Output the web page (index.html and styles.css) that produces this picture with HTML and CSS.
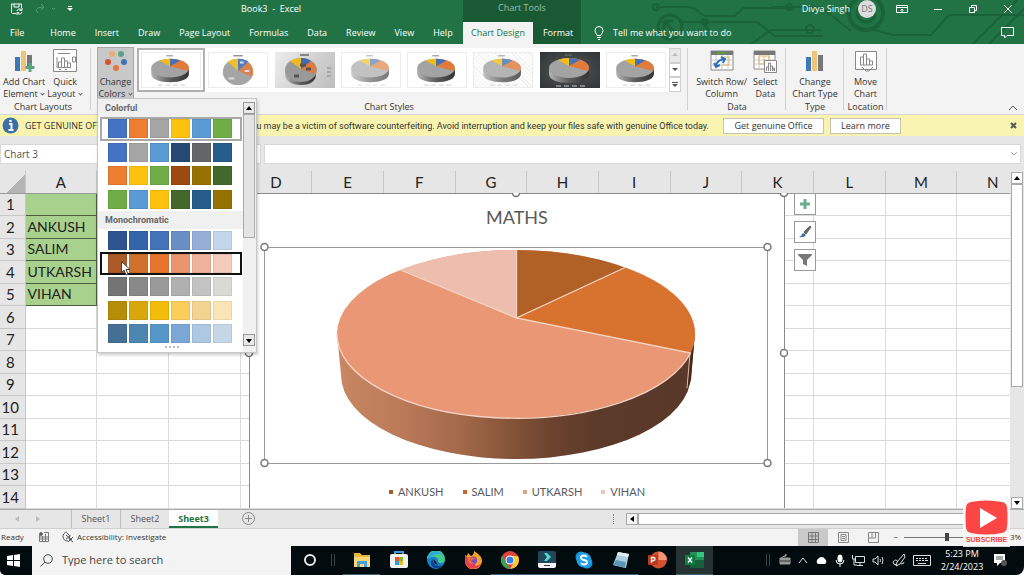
FILE: index.html
```html
<!DOCTYPE html>
<html lang="en">
<head>
<meta charset="utf-8">
<title>Book3 - Excel</title>
<link rel="stylesheet" href="styles.css">
</head>
<body>
<svg class="defs" aria-hidden="true">
  <defs>
    <linearGradient id="rim" x1="0" x2="1" y1="0" y2="0">
      <stop offset="0" stop-color="#b5b5b5"/><stop offset=".5" stop-color="#5c5c5c"/><stop offset="1" stop-color="#333"/>
    </linearGradient>
    <symbol id="pie" viewBox="0 0 60 36">
      <path d="M9 17v5c0 6 9 9 20 9s20-3 20-9v-5z" fill="url(#rim)"/>
      <ellipse cx="29" cy="16" rx="20" ry="10" fill="#a3a3a3"/>
      <path d="M29 14V6c10 0 20 4 20 10l-1 3z" fill="#e07b39"/>
      <path d="M29 14V6q6 0 11 2z" fill="#4472b8"/>
      <path d="M29 14L18 8q5-2 11-2z" fill="#f5bd14"/>
      <path d="M25 3h7" stroke="#777"/>
      <path d="M16 34h5m3 0h5m3 0h5m3 0h5" stroke="#ccc"/>
    </symbol>
  </defs>
</svg>

<header class="titlebar">
  <div class="title-main">
    <div class="title-row">
      <button class="ico" aria-label="Save"><svg width="12" height="12" viewBox="0 0 12 12" fill="none" stroke="#fff"><path d="M5 10.500H1.500l-1-1V1h10v4M3 1v3h5V1M6 8a2.500 2.500 0 0 1 4.500-1M11 5v2.500H8.500M11 9a2.500 2.500 0 0 1-4.500 1M6 12V9.500h2"/></svg></button>
      <button class="ico redo" aria-label="Redo"><svg width="20" height="12" viewBox="0 0 20 12" fill="none" stroke="#5c9b78"><path d="M3 10C-1 6 3 4 9 4M6 1l3 3-3 3M17 5l1.500 1.500L20 5"/></svg></button>
      <button class="ico more" aria-label="Customize Quick Access Toolbar"><svg width="6" height="6" viewBox="0 0 6 6" fill="#fff"><path d="M1 0h4v1H1zM0 2h6L3 5z"/></svg></button>
      <span class="doc">Book3&nbsp; -&nbsp; Excel</span>
    </div>
    <nav class="tabs">
      <a href="#" class="file">File</a><a href="#">Home</a><a href="#">Insert</a><a href="#">Draw</a><a href="#">Page Layout</a><a href="#">Formulas</a><a href="#">Data</a><a href="#">Review</a><a href="#">View</a><a href="#">Help</a>
    </nav>
  </div>
  <div class="title-tools">
    <div class="tools-name">Chart Tools</div>
    <nav class="tabs"><a href="#" class="on" aria-current="page">Chart Design</a><a href="#">Format</a></nav>
  </div>
  <div class="title-end">
    <svg class="circuit" width="443" height="44" viewBox="0 0 443 44" fill="none" stroke="#1a6239" stroke-width="2" aria-hidden="true">
      <path d="M75 7h30q8 0 13 5l6 4h30l8-8h48M98 22h22l16 16M170 44l20-14h50M124 22h52l18 14h48M290 29l22 6h38l18-20h75M190 7h50l30 24M392 44l44-44M408 44l36-36"/>
      <circle cx="75" cy="7" r="3"/><circle cx="124" cy="22" r="3" fill="#1a6239"/><circle cx="208" cy="7" r="3"/><circle cx="229" cy="29" r="4"/>
      <circle cx="89" cy="27" r="12" stroke-width="3"/><path d="M83 21v12M83 21h9M84 22l11 11" stroke-width="3"/>
      <circle cx="285" cy="13" r="17" stroke-width="4"/><circle cx="285" cy="13" r="9" stroke-width="3"/>
    </svg>
    <div class="title-row end">
      <span class="user">Divya Singh</span><span class="avatar">DS</span>
      <button class="ico" aria-label="Ribbon display options"><svg width="12" height="10" viewBox="0 0 12 10" fill="none" stroke="#fff"><path d="M.5 1.500h11v7H.5zM.5 3.500h11M6 8V5M4.500 6.500L6 5l1.500 1.500"/></svg></button>
      <button class="ico" aria-label="Minimize"><svg width="10" height="10" stroke="#fff"><path d="M1 5.500h8"/></svg></button>
      <button class="ico" aria-label="Restore"><svg width="10" height="10" fill="none" stroke="#fff"><path d="M1.500 3.500h5v5h-5zM3.500 3V1.500h5v5H7"/></svg></button>
      <button class="ico" aria-label="Close"><svg width="10" height="10" stroke="#fff"><path d="M1 1l8 8M9 1L1 9"/></svg></button>
    </div>
    <div class="tell-row">
      <svg width="10" height="14" viewBox="0 0 10 14" fill="none" stroke="#fff"><path d="M3 9.500C3 7.500 1 7 1 4.500a4 4 0 0 1 8 0C9 7 7 7.500 7 9.500zM3 11.500h4M4 13.500h2"/></svg>
      <button class="tell">Tell me what you want to do</button>
      <button class="ico comment" aria-label="Comments"><svg width="13" height="12" viewBox="0 0 13 12" fill="none" stroke="#fff"><path d="M.5.500h12v8H6L3.500 11V8.500h-3z"/></svg></button>
    </div>
  </div>
</header>

<section class="ribbon" aria-label="Chart Design">
  <div class="group layouts">
    <div class="group-body">
      <button class="big"><svg width="24" height="24" viewBox="0 0 24 24"><path d="M3 8h5v14H3z" fill="#3d7ab5"/><path d="M9 2h5v20H9z" fill="#efc57d"/><path d="M15 6h5v13h-5z" fill="#777"/><path d="M18 14v9M13.500 18.500h9" stroke="#5aa583" stroke-width="3"/></svg><span>Add Chart<br>Element <i></i></span></button>
      <button class="big"><svg width="24" height="24" viewBox="0 0 24 24" fill="none" stroke="#888"><path d="M.5.500h23v22H.5z" fill="#fff"/><path d="M5 4.500h12M4 8v10.500h14M5.500 18v-5h3v5M8.500 18V9h3v9m0-6h3v6m0-4h3v4M19.500 8v5h3V8zM6 20.500h2m4 0h2"/></svg><span>Quick<br>Layout <i></i></span></button>
    </div>
    <h2>Chart Layouts</h2>
  </div>
  <div class="group styles">
    <div class="group-body">
      <button class="big colors" aria-expanded="true"><svg width="24" height="24" viewBox="0 0 24 24"><circle cx="8" cy="5" r="3" fill="#ecaa76"/><circle cx="17" cy="5" r="3" fill="#5aa583"/><circle cx="4" cy="13" r="3" fill="#d35230"/><circle cx="20" cy="13" r="3" fill="#3d74b5"/><circle cx="12" cy="19" r="3" fill="#e6763a"/></svg><span>Change<br>Colors <i></i></span></button>
      <div class="gallery">
        <button class="thumb sel" aria-label="Style 1"><svg><use href="#pie"/></svg></button>
        <button class="thumb" aria-label="Style 2"><svg viewBox="0 0 60 36"><ellipse cx="30" cy="20" rx="16" ry="14" fill="#a5a5a5"/><path d="M30 19V6a16 14 0 0 1 15 19z" fill="#d9824f"/><path d="M30 19V6q7 0 11 3z" fill="#4f7fc2"/><path d="M30 19L19 9q5-3 11-3z" fill="#f2bf2b"/><path d="M25 3h10" stroke="#555"/><path d="M20 27h6m6-17h4m1 9h5" stroke="#ddd" stroke-width="2"/></svg></button>
        <button class="thumb shade" aria-label="Style 3"><svg viewBox="0 0 60 36"><path d="M10 18v5c0 5 6 10 16 10s15-5 15-10v-5z" fill="url(#rim)"/><ellipse cx="26" cy="18" rx="16" ry="12" fill="#999"/><path d="M26 17V6c10 0 18 8 14 16z" fill="#e07b39"/><path d="M26 17V6q6 0 10 3z" fill="#3f6db5"/><path d="M26 17L15 9q5-3 11-3z" fill="#f2ba20"/><path d="M25 3h9" stroke="#333"/><path d="M19 24h5m7-7h5m-11-4h6" stroke="#555" stroke-width="3"/><path d="M52 16h4m-4 4h4m-4 4h4" stroke="#888"/></svg></button>
        <button class="thumb pale" aria-label="Style 4"><svg><use href="#pie"/></svg></button>
        <button class="thumb" aria-label="Style 5"><svg><use href="#pie"/></svg></button>
        <button class="thumb hatch" aria-label="Style 6"><svg><use href="#pie"/></svg></button>
        <button class="thumb dark" aria-label="Style 7"><svg><use href="#pie"/></svg></button>
        <button class="thumb" aria-label="Style 8"><svg><use href="#pie"/></svg></button>
      </div>
      <div class="gallery-nav">
        <button aria-label="Previous row" disabled><svg width="6" height="6" fill="#bbb"><path d="M0 4h6L3 1z"/></svg></button>
        <button aria-label="Next row"><svg width="6" height="6" fill="#555"><path d="M0 1h6L3 4z"/></svg></button>
        <button aria-label="More styles"><svg width="6" height="6" fill="#555"><path d="M0 0h6v1H0zM0 2h6L3 5z"/></svg></button>
      </div>
    </div>
    <h2>Chart Styles</h2>

    <div class="palette" role="listbox" aria-label="Change Colors">
      <div class="palette-list">
        <h3>Colorful</h3>
        <div class="sets">
          <button class="set current" aria-label="Colorful 1"><b class="c-blue"></b><b class="c-orange"></b><b class="c-gray"></b><b class="c-gold"></b><b class="c-sky"></b><b class="c-green"></b></button>
          <button class="set" aria-label="Colorful 2"><b class="c-blue"></b><b class="c-gray"></b><b class="c-sky"></b><b class="c-navy"></b><b class="c-slate"></b><b class="c-deep"></b></button>
          <button class="set" aria-label="Colorful 3"><b class="c-orange"></b><b class="c-gold"></b><b class="c-green"></b><b class="c-rust"></b><b class="c-olive"></b><b class="c-forest"></b></button>
          <button class="set" aria-label="Colorful 4"><b class="c-green"></b><b class="c-sky"></b><b class="c-gold"></b><b class="c-forest"></b><b class="c-deep"></b><b class="c-olive"></b></button>
        </div>
        <h3>Monochromatic</h3>
        <div class="sets mono">
          <button class="set m-blue" aria-label="Monochromatic 1"><b></b><b></b><b></b><b></b><b></b><b></b></button>
          <button class="set m-orange hover" aria-label="Monochromatic 2"><b></b><b></b><b></b><b></b><b></b><b></b></button>
          <button class="set m-gray" aria-label="Monochromatic 3"><b></b><b></b><b></b><b></b><b></b><b></b></button>
          <button class="set m-gold" aria-label="Monochromatic 4"><b></b><b></b><b></b><b></b><b></b><b></b></button>
          <button class="set m-sky" aria-label="Monochromatic 5"><b></b><b></b><b></b><b></b><b></b><b></b></button>
        </div>
        <div class="grip"></div>
      </div>
      <div class="palette-scroll">
        <button aria-label="Scroll up"><svg width="6" height="5"><path d="M0 4h6L3 0z"/></svg></button>
        <div class="bar"></div>
        <button aria-label="Scroll down"><svg width="6" height="5"><path d="M0 1h6L3 5z"/></svg></button>
      </div>
      <svg class="pointer" width="10" height="15" viewBox="0 0 10 15"><path d="M.5.500v11l2.500-2.500 2 5 2-1-2-4.500h4z" fill="#fff" stroke="#444"/></svg>
    </div>
  </div>
  <div class="group data">
    <div class="group-body">
      <button class="big"><svg width="24" height="24" viewBox="0 0 24 24" fill="none"><path d="M1 2h22v19H1z" fill="#fff" stroke="#888"/><path d="M1 2h22v4H1z" fill="#777"/><path d="M7 4h9" stroke="#5a9e3d" stroke-width="2"/><path d="M1 11h22M1 16h22M6 6v15M12 6v15M18 6v15" stroke="#c9c9c9"/><path d="M14 8h5v8h-7" stroke="#e5b566"/><path d="M6 17q1-6 8-7M4 14l2 4 4-2M11 8l4 2-2 4" stroke="#2e74b5" stroke-width="2"/></svg><span>Switch Row/<br>Column</span></button>
      <button class="big"><svg width="24" height="24" viewBox="0 0 24 24" fill="none"><path d="M1 2h21v18H1z" fill="#fff" stroke="#888"/><path d="M1 2h21v4H1z" fill="#777"/><path d="M1 11h21M1 15h21M6 6v14M16 6v14" stroke="#c9c9c9"/><path d="M6 7h10v8H6zM11 7v8" stroke="#e5b566"/><path d="M11.500 11.500h12v12h-12z" fill="#fff" stroke="#888"/><path d="M13.500 22v-4h2v4m0 0v-8h2v8m0-5h2v5m0-3h2v3z" stroke="#888"/></svg><span>Select<br>Data</span></button>
    </div>
    <h2>Data</h2>
  </div>
  <div class="group type">
    <div class="group-body">
      <button class="big"><svg width="24" height="24" viewBox="0 0 24 24"><path d="M3 8h5v14H3z" fill="#3d7ab5"/><path d="M9 2h5v20H9z" fill="#efc57d"/><path d="M15 6h5v16h-5z" fill="#777"/></svg><span>Change<br>Chart Type</span></button>
    </div>
    <h2>Type</h2>
  </div>
  <div class="group loc">
    <div class="group-body">
      <button class="big"><svg width="24" height="24" viewBox="0 0 24 24" fill="none" stroke="#888"><path d="M1.500 2.500h21v18h-21z" fill="#fff"/><path d="M6.500 16V8h3v8zm3 0V5h3v11zm3 0v-6h3v6zm3 0v-4h3v4zM8 18l4 4h3l4-4"/></svg><span>Move<br>Chart</span></button>
    </div>
    <h2>Location</h2>
  </div>
  <button class="ico collapse" aria-label="Collapse the ribbon"><svg width="10" height="6" fill="none" stroke="#555"><path d="M1 5l4-4 4 4"/></svg></button>
</section>

<section class="notice" role="alert">
  <svg width="17" height="17" viewBox="0 0 17 17"><circle cx="8.500" cy="8.500" r="8" fill="#3b6fa8"/><path d="M7 7h2.500v6M6.500 13h5" stroke="#fff" stroke-width="2" fill="none"/><circle cx="8.500" cy="4" r="1.300" fill="#fff"/></svg>
  <span class="notice-name">GET GENUINE OFFICE</span>
  <span class="notice-text">Your license isn't genuine, you may be a victim of software counterfeiting. Avoid interruption and keep your files safe with genuine Office today.</span>
  <button class="act get">Get genuine Office</button>
  <button class="act">Learn more</button>
  <button class="ico close" aria-label="Close message"><svg width="7" height="7" stroke="#555" stroke-width="2"><path d="M1 1l5 5M6 1L1 6"/></svg></button>
</section>

<section class="formula">
  <input class="name" type="text" value="Chart 3" aria-label="Name box">
  <input class="fx" type="text" aria-label="Formula bar">
  <button class="ico expand" aria-label="Expand formula bar"><svg width="6" height="5" fill="none" stroke="#aaa"><path d="M0 1l3 3 3-3"/></svg></button>
</section>

<main class="sheet">
  <div class="cells">
    <table>
      <thead><tr><th class="corner" aria-label="Select all"></th><th>A</th><th>B</th><th>C</th><th>D</th><th>E</th><th>F</th><th>G</th><th>H</th><th>I</th><th>J</th><th>K</th><th>L</th><th>M</th><th>N</th></tr></thead>
      <tbody>
        <tr><th>1</th><td class="fill"></td><td></td><td></td><td></td><td></td><td></td><td></td><td></td><td></td><td></td><td></td><td></td><td></td><td></td></tr>
        <tr><th>2</th><td class="fill">ANKUSH</td><td></td><td></td><td></td><td></td><td></td><td></td><td></td><td></td><td></td><td></td><td></td><td></td><td></td></tr>
        <tr><th>3</th><td class="fill">SALIM</td><td></td><td></td><td></td><td></td><td></td><td></td><td></td><td></td><td></td><td></td><td></td><td></td><td></td></tr>
        <tr><th>4</th><td class="fill">UTKARSH</td><td></td><td></td><td></td><td></td><td></td><td></td><td></td><td></td><td></td><td></td><td></td><td></td><td></td></tr>
        <tr><th>5</th><td class="fill">VIHAN</td><td></td><td></td><td></td><td></td><td></td><td></td><td></td><td></td><td></td><td></td><td></td><td></td><td></td></tr>
        <tr><th>6</th><td></td><td></td><td></td><td></td><td></td><td></td><td></td><td></td><td></td><td></td><td></td><td></td><td></td><td></td></tr>
        <tr><th>7</th><td></td><td></td><td></td><td></td><td></td><td></td><td></td><td></td><td></td><td></td><td></td><td></td><td></td><td></td></tr>
        <tr><th>8</th><td></td><td></td><td></td><td></td><td></td><td></td><td></td><td></td><td></td><td></td><td></td><td></td><td></td><td></td></tr>
        <tr><th>9</th><td></td><td></td><td></td><td></td><td></td><td></td><td></td><td></td><td></td><td></td><td></td><td></td><td></td><td></td></tr>
        <tr><th>10</th><td></td><td></td><td></td><td></td><td></td><td></td><td></td><td></td><td></td><td></td><td></td><td></td><td></td><td></td></tr>
        <tr><th>11</th><td></td><td></td><td></td><td></td><td></td><td></td><td></td><td></td><td></td><td></td><td></td><td></td><td></td><td></td></tr>
        <tr><th>12</th><td></td><td></td><td></td><td></td><td></td><td></td><td></td><td></td><td></td><td></td><td></td><td></td><td></td><td></td></tr>
        <tr><th>13</th><td></td><td></td><td></td><td></td><td></td><td></td><td></td><td></td><td></td><td></td><td></td><td></td><td></td><td></td></tr>
        <tr><th>14</th><td></td><td></td><td></td><td></td><td></td><td></td><td></td><td></td><td></td><td></td><td></td><td></td><td></td><td></td></tr>
      </tbody>
    </table>
    <figure class="chart">
      <svg class="plot" width="548" height="315" viewBox="243 193 548 315" role="img" aria-label="3-D pie chart of MATHS">
        <defs>
          <linearGradient id="side" gradientUnits="userSpaceOnUse" x1="338" x2="695" y1="0" y2="0">
            <stop offset="0" stop-color="#c98763"/><stop offset=".2" stop-color="#b87857"/><stop offset=".35" stop-color="#a26849"/><stop offset=".48" stop-color="#855439"/><stop offset=".6" stop-color="#6c432f"/><stop offset=".72" stop-color="#5c3a2a"/><stop offset="1" stop-color="#5a3829"/>
          </linearGradient>
        </defs>
        <path d="M249 193V508H785V193z" fill="#fff"/>
        <path d="M249.500 193V508M784.500 193V508M249 193.500H785" stroke="#8a8a8a" fill="none"/>
        <path d="M264.500 247.500h503v216h-503z" fill="none" stroke="#9a9a9a"/>
        <path d="M337 334L341 375A175 84 0 0 0 691 375L695 334z" fill="url(#side)"/>
        <path d="M690 353l4-9-3 36-4 9z" fill="#43291d"/><path d="M690 354l-3 34" stroke="#e5b9a4"/>
        <ellipse cx="516" cy="334" rx="179" ry="84" fill="#e99774"/>
        <path d="M516.500 318L400.500 270A179 84 0 0 1 516.500 250z" fill="#edbdae"/>
        <path d="M516.500 318V250A179 84 0 0 1 625 267.500z" fill="#b16126"/>
        <path d="M516.500 318L625 267.500A179 84 0 0 1 690.500 353z" fill="#d8732f"/>
        <path d="M516.500 250V318L400.500 270M625 267.500L516.500 318L690.500 353A179 84 0 0 1 337 334" fill="none" stroke="#f6d3c3" stroke-width="1.300"/>
        <g fill="#fff" stroke="#777" stroke-width="1.500"><circle cx="264.500" cy="247" r="3.500"/><circle cx="767.500" cy="247" r="3.500"/><circle cx="264.500" cy="463" r="3.500"/><circle cx="767.500" cy="463" r="3.500"/><circle cx="249" cy="353" r="3.500"/><circle cx="784" cy="353" r="3.500"/><circle cx="784" cy="193" r="3.500"/><circle cx="516" cy="193" r="3.500"/></g>
      </svg>
      <figcaption>MATHS</figcaption>
      <ul class="legend"><li class="k1">ANKUSH</li><li class="k2">SALIM</li><li class="k3">UTKARSH</li><li class="k4">VIHAN</li></ul>
    </figure>
    <div class="chart-tools">
      <button aria-label="Chart Elements"><svg width="12" height="12" stroke="#6cab8c" stroke-width="3"><path d="M6 1v10M1 6h10"/></svg></button>
      <button aria-label="Chart Styles"><svg width="14" height="14" viewBox="0 0 14 14"><path d="M6 7l6-6 1 1-5 7z" fill="#666" stroke="#666"/><path d="M1 12q3-1 3-3l2-1 2 2q-2 3-7 2z" fill="#3d74a5"/></svg></button>
      <button aria-label="Chart Filters"><svg width="14" height="13" viewBox="0 0 14 13"><path d="M0 0h14v1L9 6v6l-4-2V6L0 1z" fill="#777"/></svg></button>
    </div>
  </div>
  <div class="vscroll">
    <button aria-label="Scroll up"><svg width="6" height="5"><path d="M0 4h6L3 0z"/></svg></button>
    <div class="bar"></div>
    <button aria-label="Scroll down"><svg width="6" height="5"><path d="M0 1h6L3 5z"/></svg></button>
  </div>
</main>

<section class="sheetbar">
  <div class="arrows"><button class="ico" aria-label="Previous sheet"><svg width="4" height="6" fill="#bbb"><path d="M4 0v6L0 3z"/></svg></button><button class="ico" aria-label="Next sheet"><svg width="4" height="6" fill="#bbb"><path d="M0 0v6l4-3z"/></svg></button></div>
  <nav class="sheets"><a href="#">Sheet1</a><a href="#">Sheet2</a><a href="#" class="on" aria-current="page">Sheet3</a></nav>
  <button class="ico add" aria-label="New sheet"><svg width="13" height="13" fill="none" stroke="#888"><circle cx="6.500" cy="6.500" r="6"/><path d="M6.500 3v7M3 6.500h7"/></svg></button>
  <div class="split" aria-hidden="true"></div>
  <div class="hscroll">
    <button aria-label="Scroll left"><svg width="4" height="6"><path d="M4 0v6L0 3z"/></svg></button>
    <div class="bar"></div>
    <button aria-label="Scroll right"><svg width="4" height="6"><path d="M0 0v6l4-3z"/></svg></button>
  </div>
</section>

<section class="status">
  <span class="ready">Ready</span>
  <svg width="10" height="10" viewBox="0 0 10 10" fill="none" stroke="#777"><path d="M.5 3v6.500h9V.500H5M1 5h8M1 7h8M3.500 4v5M6.500 2v7"/><circle cx="2" cy="2" r="1.500" fill="#555"/></svg>
  <button class="access"><svg width="12" height="12" viewBox="0 0 12 12" fill="none" stroke="#555"><path d="M5 1a4.500 4.500 0 1 0 1 9M5 2l3 3-4 3M8 4l-1 4 4 3M11 6l-5 5M4 4l6 5"/></svg>Accessibility: Investigate</button>
  <div class="views">
    <button class="on" aria-label="Normal"><svg width="11" height="11" fill="none" stroke="#777"><path d="M.5.500h10v10H.5zM.5 4h10M.5 7.500h10M4 .5v10M7.500.500v10"/></svg></button>
    <button aria-label="Page Layout"><svg width="11" height="11" fill="none" stroke="#888"><path d="M.5.500h10v10H.5zM3 2.500h5v6H3zM4 4.500h3M4 6.500h3"/></svg></button>
    <button aria-label="Page Break Preview"><svg width="11" height="11" fill="none" stroke="#888"><path d="M.5.500h10v10H.5zM.5 6h7V.500M4 .5V6"/></svg></button>
  </div>
  <span class="minus">−</span>
  <input type="range" min="0" max="100" value="50" aria-label="Zoom">
  <span class="pct">3%</span>
</section>

<footer class="taskbar">
  <button class="start" aria-label="Start"><svg width="13" height="13" fill="#fff"><path d="M0 2l6-1v5H0zM7 1l6-1v6H7zM0 7h6v5l-6-1zM7 7h6v6l-6-1z"/></svg></button>
  <label class="search"><svg width="13" height="13" fill="none" stroke="#444"><circle cx="8" cy="5" r="4.300"/><path d="M5 8L.5 12.500"/></svg><input type="text" placeholder="Type here to search" aria-label="Search"></label>
  <button class="app" aria-label="Cortana"><svg width="14" height="14" fill="none" stroke="#e8e8e8" stroke-width="2"><circle cx="7" cy="7" r="5"/></svg></button>
  <span class="rule"></span>
  <div class="apps">
    <button class="app run" aria-label="File Explorer"><svg width="18" height="16" viewBox="0 0 18 16"><path d="M1 1h6l2 2h8v12H1z" fill="#e8b33f"/><path d="M1 5h16v10H1z" fill="#f8d775"/><path d="M4 9h10v6h-3v-3H7v3H4z" fill="#4a9fd8"/></svg></button>
    <button class="app" aria-label="Microsoft Store"><svg width="18" height="18" viewBox="0 0 18 18"><path d="M5 5V1h8v4" fill="none" stroke="#3b9ddd" stroke-width="2"/><rect y="3" width="18" height="14" rx="2" fill="#f1f1f1"/><path d="M5 6h4v4H5z" fill="#e8502c"/><path d="M9 6h4v4H9z" fill="#7db928"/><path d="M5 10h4v4H5z" fill="#2a9fe0"/><path d="M9 10h4v4H9z" fill="#f6b81f"/></svg></button>
    <button class="app" aria-label="Edge"><svg width="18" height="18" viewBox="0 0 18 18"><circle cx="9" cy="9" r="9" fill="#1b7fc9"/><path d="M0 8a9 9 0 0 1 18 0c0 4-4 5-7 3 1-5-5-7-11-3z" fill="#48c78c"/><path d="M0 8C1-1 12-2 16 4 9 1 5 5 0 8z" fill="#2ca9dd"/><path d="M7 8c-3 5 3 9 9 6-3 5-12 4-12-2 0-3 2-4 3-4z" fill="#12418e"/><path d="M9 7a3 3 0 0 0 1 5q-1 1 2 1-5 1-5-3z" fill="#001014"/></svg></button>
    <button class="app" aria-label="Firefox"><svg width="18" height="18" viewBox="0 0 18 18"><path d="M1 4l2 1 1-3 3 3c2-1 3-2 3-5 5 3 8 6 8 10a8.500 8.500 0 0 1-17 0z" fill="#f7a325"/><path d="M1 4l2 2 4 1 5 8q4-1 5-3c-1 8-16 8-16-2z" fill="#e9404d"/><circle cx="9" cy="9.500" r="4" fill="#7b4cc5"/><path d="M4 7q5-2 7 1l-4 1q0 3 4 3-5 3-7-2z" fill="#f06b38"/></svg></button>
    <button class="app run" aria-label="Chrome"><svg width="18" height="18" viewBox="0 0 18 18"><circle cx="9" cy="9" r="9" fill="#e0443a"/><path d="M1.200 4.500L6 13l3 5A9 9 0 0 1 1.200 4.500z" fill="#35a354"/><path d="M9 5h8a9 9 0 0 1-8 13l4-7z" fill="#f8c934"/><circle cx="9" cy="9" r="4.500" fill="#fff"/><circle cx="9" cy="9" r="3.500" fill="#3a7de0"/></svg></button>
    <button class="app run" aria-label="Filmora"><svg width="18" height="18" viewBox="0 0 18 18"><rect width="18" height="14" rx="2" fill="#22475a"/><path d="M6 2h3l4 4-4 4H6l3-4z" fill="#4edbd0"/><path d="M0 12h18v3q0 2-2 2H2q-2 0-2-2z" fill="#f4f4f4"/><path d="M6 14.500h6" stroke="#333"/></svg></button>
    <button class="app run" aria-label="Skype"><svg width="18" height="18" viewBox="0 0 18 18"><circle cx="6" cy="6" r="5.500" fill="#1796dc"/><circle cx="12" cy="12" r="5.500" fill="#1796dc"/><circle cx="9" cy="9" r="7.500" fill="#1f9ee4"/><path d="M12 6q-1-1.500-3-1.500c-4 0-4 4 0 4.500s4 4.500 0 4.500q-2 0-3-1.500" fill="none" stroke="#fff" stroke-width="1.800"/></svg></button>
    <button class="app run" aria-label="Notepad"><svg width="18" height="18" viewBox="0 0 18 18"><path d="M6 1l11 2-3 14-13-3z" fill="#a9cfe0"/><path d="M6 1l11 2-1 3-11-2z" fill="#e4eff3"/><path d="M4 9l10 2-1 6-12-3z" fill="#5e97b5"/></svg></button>
    <button class="app" aria-label="PowerPoint"><svg width="19" height="18" viewBox="0 0 19 18"><circle cx="10.500" cy="9" r="8.500" fill="#d35030"/><path d="M10.500.500A8.500 8.500 0 0 1 19 9h-8.500z" fill="#f39476"/><rect y="4" width="10" height="10" rx="1" fill="#b93a1c"/><path d="M3.500 12V6.500h2a1.500 1.500 0 0 1 0 3h-2" fill="none" stroke="#fff" stroke-width="1.300"/></svg></button>
    <button class="app run active" aria-label="Excel"><svg width="19" height="18" viewBox="0 0 19 18"><rect x="5" y="1" width="14" height="16" rx="1" fill="#21925a"/><path d="M12 1h7v5h-7z" fill="#36c481"/><path d="M5 9h14v8H5z" fill="#175e3a"/><rect y="4" width="10" height="10" rx="1" fill="#107c41"/><path d="M3 6.500l4 5M7 6.500l-4 5" stroke="#fff" stroke-width="1.300"/></svg></button>
  </div>
  <div class="tray">
    <span class="rule"></span>
    <svg width="12" height="12" viewBox="0 0 12 12"><path d="M1 4h10v6H1zM3 4q0-2 4-2V0" fill="#9a9a9a" stroke="#9a9a9a"/><path d="M1 7h10" stroke="#333"/></svg>
    <svg width="10" height="7" fill="none" stroke="#ddd"><path d="M1 6l4-5 4 5"/></svg>
    <svg width="13" height="9"><path d="M3 8a3 3 0 0 1 0-5 4 4 0 0 1 7 0 3 3 0 0 1 0 5z" fill="#fff"/></svg>
    <svg width="10" height="13" fill="none" stroke="#fff"><rect x="3" y="1" width="4" height="7" rx="2" fill="#fff"/><path d="M1 6q0 4 4 4t4-4M5 10v3"/></svg>
    <svg width="13" height="12" fill="none" stroke="#ddd"><path d="M3.500 2.500h9v6h-9zM5 11.500h6M8 8v3M.5 1v4h3M2 5v6h3"/></svg>
    <svg width="13" height="11" fill="none" stroke="#ddd"><path d="M1 4h2l3-3v9L3 7H1zM8 4q1 1.500 0 3M10 2q2 3 0 7"/></svg>
    <svg width="14" height="14" viewBox="0 0 14 14" fill="none" stroke="#ddd"><path d="M12 1L5 9l-1 4 4-2 5-7zM1 9q3-4 5 0M1 9q0 3 4 3M9 11q3 0 3-2"/></svg>
    <svg width="18" height="11" fill="none" stroke="#ddd"><path d="M.5.500h17v10H.5zM3 3.500h2m1 0h2m1 0h2m1 0h2M3 5.500h2m1 0h2m1 0h2m1 0h3M5 8.500h8"/></svg>
    <time class="clock">5:23 PM<br>2/24/2023</time>
    <svg width="14" height="14"><path d="M1 1h11v9H7l-3 3v-3H1z" fill="#fff"/><path d="M3 4h7M3 6h7" stroke="#555"/><circle cx="11" cy="10" r="3" fill="#555"/></svg>
  </div>
</footer>

<a href="#" class="subscribe"><svg width="43" height="35" viewBox="0 0 43 35"><path d="M6 2Q21-1 37 2q5 1 5 6 1 10 0 19 0 5-5 6-16 3-31 0-5-1-5-6-1-10 0-19 0-5 5-6z" fill="#fc4545"/><path d="M15 8l17 10-17 10z" fill="#fff"/></svg><span>SUBSCRIBE</span></a>
</body>
</html>
```
FILE: styles.css
```css
* { box-sizing: border-box; }
body {
  margin: 0;
  min-height: 100vh;
  padding-bottom: 2px;
  display: flex;
  flex-direction: column;
  position: relative;
  overflow: hidden;
  background: #fff;
  color: #333;
  font: 9px/12px "Open Sans", "Noto Sans", sans-serif;
}
button, input { font: inherit; color: inherit; margin: 0; padding: 0; border: 0; background: none; }
h2, h3, ul, figure { margin: 0; padding: 0; font: inherit; }
a { color: inherit; text-decoration: none; }
svg { display: block; flex: none; }
.defs { position: absolute; width: 0; height: 0; }
.ico { display: flex; align-items: center; justify-content: center; }

/* title bar */
.titlebar { display: flex; background: #217346; color: #fff; height: 44px; font-weight: 500; }
.title-main { width: 463px; }
.title-row { display: flex; align-items: center; height: 18px; padding-left: 11px; }
.redo { margin-left: 12px; }
.more { margin-left: 12px; }
.doc { margin-left: 168px; }
.tabs { display: flex; height: 22px; align-items: center; white-space: nowrap; }
.title-main .tabs { margin-top: 4px; }
.tabs a { padding: 0 9px 0 10px; line-height: 22px; }
.tabs .file { padding-right: 16px; }
.title-tools { width: 118px; background: #195a35; }
.tools-name { height: 22px; line-height: 16px; text-align: center; color: #9cbfac; }
.tabs .on { background: #f3f3f3; color: #217346; padding: 0 8px; }
.title-end { flex: 1; position: relative; }
.circuit { position: absolute; right: 0; top: 0; }
.title-row.end { position: relative; justify-content: flex-end; padding-right: 11px; gap: 25px; }
.user { margin-right: -17px; }
.avatar { width: 18px; height: 18px; border-radius: 50%; background: #ddd; color: #777; text-align: center; line-height: 18px; margin-right: -5px; }
.tell-row { position: relative; display: flex; align-items: center; height: 22px; margin-top: 4px; padding: 0 10px 0 13px; gap: 9px; }
.comment { margin-left: auto; }

/* ribbon */
.ribbon { display: flex; height: 71px; background: #f3f3f3; border-bottom: 1px solid #d5d5d5; }
.group { position: relative; display: flex; flex-direction: column; justify-content: space-between; padding: 4px 3px 1px; }
.group::after { content: ""; position: absolute; right: 0; top: 4px; bottom: 4px; width: 1px; background: #d0d0d0; }
.group h2 { text-align: center; line-height: 12px; }
.group-body { display: flex; gap: 6px; justify-content: center; }
.layouts { width: 91px; padding-left: 2px; padding-right: 7px; }
.layouts .group-body { gap: 2px; }
.big { display: flex; flex-direction: column; align-items: center; gap: 3px; padding-top: 1px; white-space: nowrap; }
.big i { display: inline-block; width: 3px; height: 3px; border: solid #666; border-width: 0 1px 1px 0; transform: rotate(45deg); margin: 0 1px 2px; }
.styles { width: 597px; padding-left: 6px; padding-right: 7px; }
.styles .group-body { gap: 0; justify-content: flex-start; }
.colors { width: 37px; height: 52px; margin-top: -1px; background: #c8c8c8; border: 1px solid #a8a8a8; }
.gallery { display: flex; flex: 1; margin-left: 3px; height: 44px; background: #fff; }
.thumb { flex: 1; height: 44px; padding: 4px 3px; }
.thumb svg { width: 60px; height: 36px; border: 1px solid #ececec; }
.thumb.sel { border: 2px solid #b0b0b0; padding: 2px; }
.shade svg { background: linear-gradient(120deg, #ececec, #bdbdbd); border: 0; }
.pale use { opacity: 0.65; }
.hatch svg { background: repeating-linear-gradient(45deg, #fff 0 2px, #f0f0f0 2px 3px); }
.hatch use { opacity: 0.8; }
.dark svg { background: radial-gradient(#555, #303436); border: 0; }
.gallery-nav { display: flex; flex-direction: column; width: 12px; height: 44px; }
.gallery-nav button { flex: 1; border: 1px solid #cfcfcf; background: #fff; display: flex; align-items: center; justify-content: center; }
.gallery-nav button:disabled { background: #e8e8e8; }
.data { width: 98px; }
.type { width: 58px; }
.loc { width: 43px; }
.collapse { margin: auto 6px 3px auto; }

/* colour palette drop-down */
.palette { position: absolute; z-index: 5; left: 6px; top: 54px; width: 160px; display: flex; background: #fff; border: 1px solid #c6c6c6; box-shadow: 1px 2px 3px #0003; }
.palette-list { flex: 1; padding: 0 0 0 2px; }
.palette h3 { height: 18px; line-height: 18px; margin-left: -2px; padding-left: 7px; background: #f0f0f0; color: #666; font-weight: 700; font-family: Roboto, "Open Sans", sans-serif; }
.sets { display: grid; grid-auto-rows: 1fr; height: 94px; }
.sets.mono { height: 116px; }
.set { display: flex; align-items: center; gap: 2px; width: 142px; padding-left: 6px; border: 2px solid transparent; }
.set.current { border-color: #a8a8a8; }
.set.hover { border-color: #111; }
.set b { width: 19px; height: 19px; border: 1px solid #0001; }
.c-blue { background: #4472c4; } .c-orange { background: #ed7d31; } .c-gray { background: #a5a5a5; }
.c-gold { background: #ffc20e; } .c-sky { background: #5b9bd5; } .c-green { background: #70ad47; }
.c-navy { background: #264a73; } .c-slate { background: #636668; } .c-deep { background: #255e8c; }
.c-rust { background: #9c4a10; } .c-olive { background: #967300; } .c-forest { background: #43682b; }
.m-blue b:nth-child(1) { background: #2f5590; } .m-blue b:nth-child(2) { background: #3565a9; } .m-blue b:nth-child(3) { background: #4472b8; }
.m-blue b:nth-child(4) { background: #698ec4; } .m-blue b:nth-child(5) { background: #97aed6; } .m-blue b:nth-child(6) { background: #c3d5e8; }
.m-orange b:nth-child(1) { background: #ab5a28; } .m-orange b:nth-child(2) { background: #d0712d; } .m-orange b:nth-child(3) { background: #e7752e; }
.m-orange b:nth-child(4) { background: #eb956f; } .m-orange b:nth-child(5) { background: #f1b29d; } .m-orange b:nth-child(6) { background: #f4cabb; }
.m-gray b:nth-child(1) { background: #747474; } .m-gray b:nth-child(2) { background: #898989; } .m-gray b:nth-child(3) { background: #999; }
.m-gray b:nth-child(4) { background: #b0b0b0; } .m-gray b:nth-child(5) { background: #c3c3c3; } .m-gray b:nth-child(6) { background: #d9dad6; }
.m-gold b:nth-child(1) { background: #b78c08; } .m-gold b:nth-child(2) { background: #d9a70c; } .m-gold b:nth-child(3) { background: #f2bc0b; }
.m-gold b:nth-child(4) { background: #fbcd5a; } .m-gold b:nth-child(5) { background: #f3d292; } .m-gold b:nth-child(6) { background: #fbe5b8; }
.m-sky b:nth-child(1) { background: #466f94; } .m-sky b:nth-child(2) { background: #4c86b1; } .m-sky b:nth-child(3) { background: #5796c9; }
.m-sky b:nth-child(4) { background: #7ba7d6; } .m-sky b:nth-child(5) { background: #adc8e2; } .m-sky b:nth-child(6) { background: #c5d6e7; }
.grip { height: 6px; width: 14px; margin: 1px auto 0; border-top: 2px dotted #bbb; }
.palette-scroll { width: 13px; background: #f0f0f0; display: flex; flex-direction: column; padding: 3px 1px 6px 0; }
.palette-scroll button { height: 12px; border: 1px solid #999; background: #e8e8e8; display: flex; align-items: center; justify-content: center; }
.palette-scroll .bar { height: 124px; margin-bottom: auto; border: 1px solid #aaa; background: #e4e4e4; }
.pointer { position: absolute; left: 23px; top: 162px; }

/* message bar */
.notice { display: flex; align-items: center; height: 21px; padding: 0 7px 0 2px; background: #f8f4b0; white-space: nowrap; }
.notice-name { margin-left: 6px; }
.notice-text { flex: 1; min-width: 0; overflow: hidden; display: flex; justify-content: flex-end; margin: 0 14px 0 6px; font-family: Roboto, "Open Sans", sans-serif; }
.act { flex: none; height: 16px; width: 71px; border: 1px solid #c4c4b0; background: #fff; line-height: 14px; }
.act.get { width: 101px; margin-right: 6px; }
.notice .close { margin-left: 108px; width: 8px; }

/* formula bar */
.formula { position: relative; display: flex; gap: 3px; padding: 8px 3px 7px 0; background: #e6e6e6; }
.formula input { height: 20px; background: #fff; border: 1px solid #d8d8d8; padding: 0 3px; color: #555; font-size: 10px; }
.name { width: 261px; }
.fx { flex: 1; }
.expand { position: absolute; right: 7px; top: 15px; }

/* worksheet */
.sheet { display: flex; flex: 1; background: #e6e6e6; }
.cells { flex: 1; min-width: 0; position: relative; overflow: hidden; }
table { width: calc(100% + 19px); table-layout: fixed; border-collapse: collapse; font: 14px/18px Lato, "Open Sans", sans-serif; color: #222; background: #fff; }
tr { height: 22px; }
tbody tr:nth-child(even) { height: 23px; }
th { padding: 0; font-size: 15px; font-weight: 400; background: #e6e6e6; border-right: 1px solid #c8c8c8; border-bottom: 1px solid #c8c8c8; }
thead th { border-bottom-color: #999; }
tbody th { padding-right: 4px; }
.corner { width: 25px; background: linear-gradient(135deg, #e6e6e6 60%, #b4b4b4 60%); }
td { padding: 0 2px; white-space: nowrap; border-right: 1px solid #dadada; border-bottom: 1px solid #dadada; }
td.fill { background: #a9d18e; border: 1px solid #4c5d42; }
.chart { position: absolute; left: 243px; top: 22px; width: 548px; height: 315px; overflow: hidden; display: flex; flex-direction: column; justify-content: space-between; align-items: center; font: 11px/16px Lato, "Open Sans", sans-serif; color: #595959; }
.plot { position: absolute; left: 0; top: 0; }
figcaption { position: relative; margin: 12px 0 0; font-size: 18px; line-height: 24px; }
.legend { position: relative; display: flex; gap: 19px; margin: 0 0 8px; list-style: none; }
.legend li { display: flex; align-items: center; gap: 5px; }
.legend li::before { content: ""; width: 4px; height: 4px; background: #a65c28; }
.legend .k2::before { background: #c8672b; }
.legend .k3::before { background: #d8a67c; }
.legend .k4::before { background: #edc7b8; }
.chart-tools { position: absolute; left: 794px; top: 22px; display: flex; flex-direction: column; gap: 6px; }
.chart-tools button { width: 22px; height: 22px; border: 1px solid #9a9a9a; background: #fff; display: flex; align-items: center; justify-content: center; }
.vscroll { width: 14px; display: flex; flex-direction: column; padding: 1px 1px 0; }
.vscroll button { height: 12px; background: #fff; border: 1px solid #aaa; display: flex; align-items: center; justify-content: center; }
.vscroll .bar { flex: 0 1 203px; margin-bottom: auto; background: #fff; border: 1px solid #aaa; }

/* sheet tabs */
.sheetbar { display: flex; align-items: center; height: 20px; background: #e6e6e6; border-top: 1px solid #aaa; border-bottom: 1px solid #d0d0d0; font-size: 9px; color: #555; }
.arrows { display: flex; gap: 17px; width: 71px; padding-left: 15px; }
.sheets { display: flex; align-self: stretch; }
.sheets a { width: 49px; text-align: center; line-height: 17px; border-left: 1px solid #bbb; }
.sheets .on { background: #fff; color: #217346; font-weight: 700; border-bottom: 2px solid #217346; border-left: 0; }
.add { margin-left: 24px; }
.split { margin-left: auto; height: 10px; border-left: 1px dotted #888; }
.hscroll { display: flex; width: 382px; height: 12px; margin: 0 16px 0 12px; }
.hscroll button { width: 12px; border: 1px solid #aaa; background: #f3f3f3; display: flex; align-items: center; justify-content: center; }
.hscroll .bar { flex: 1; background: #fff; border: 1px solid #aaa; }

/* status bar */
.status { display: flex; align-items: center; height: 17px; background: #f3f3f3; padding: 0 3px 0 1px; font-size: 8px; }
.ready { width: 38px; }
.access { display: flex; align-items: center; gap: 3px; margin-left: 13px; }
.views { display: flex; align-self: stretch; margin-left: auto; }
.views button { width: 30px; display: flex; align-items: center; justify-content: center; }
.views .on { background: #c9c9c9; }
.minus { margin: 0 6px 0 5px; }
.status input { appearance: none; width: 86px; height: 1px; background: #777; }
.status input::-webkit-slider-thumb { appearance: none; width: 4px; height: 8px; background: #444; }
.pct { width: 11px; margin-left: 20px; }

/* taskbar */
.taskbar { display: flex; height: 29px; background: #020b0d; border-radius: 0 0 8px 5px; overflow: hidden; color: #fff; }
.start { width: 32px; padding-left: 7px; }
.search { width: 259px; background: #f3f3f3; color: #444; display: flex; align-items: center; gap: 9px; padding-left: 8px; font-size: 11px; }
.search input { flex: 1; min-width: 0; }
.search input::placeholder { color: #444; opacity: 1; }
.app { width: 37px; display: flex; align-items: center; justify-content: center; }
.rule { width: 4px; height: 12px; align-self: center; border: solid #3a4244; border-width: 0 1px; margin: 0 8px 0 3px; }
.apps { display: flex; }
.app.run { box-shadow: inset 0 -1px #3f6278; }
.app.active { background: #253432; }
.tray { display: flex; align-items: center; margin-left: auto; padding-right: 17px; gap: 7px; }
.tray .rule { margin: 0 2px 0 0; }
.clock { text-align: center; line-height: 13px; width: 48px; }

.subscribe { position: absolute; z-index: 6; right: 14px; bottom: 30px; width: 47px; height: 48px; padding-top: 1px; display: flex; flex-direction: column; align-items: center; background: #f7f7f7dd; color: #f04545; font: 700 7px/10px "Liberation Sans", sans-serif; }
```
